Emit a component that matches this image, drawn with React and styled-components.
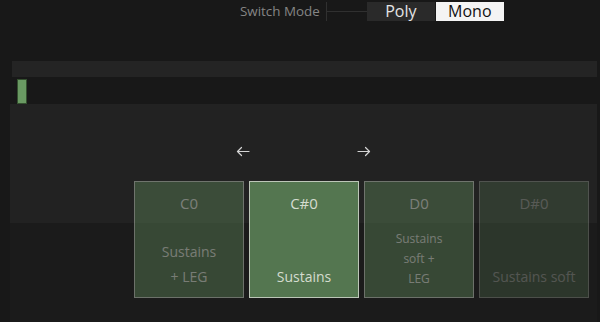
import React from "react";
import styled, { createGlobalStyle } from "styled-components";

const Global = createGlobalStyle`
  html, body { margin: 0; padding: 0; background: #181818; }
  body { font-family: "Open Sans", "Noto Sans", sans-serif; overflow: hidden; }
  * { box-sizing: border-box; }
`;

const Page = styled.div`
  width: 600px;
  height: 322px;
  display: flex;
  flex-direction: column;
  background: #181818;
`;

const Header = styled.div`
  display: flex;
  align-items: center;
  height: 23px;
  padding-left: 240px;
`;

const ModeLabel = styled.span`
  font-size: 13.4px;
  color: #858585;
  line-height: 19px;
`;

const Connector = styled.div`
  width: 41px;
  height: 19px;
  margin-left: 6px;
  border-left: 1px solid #303030;
  display: flex;
  align-items: center;
  &::after {
    content: "";
    flex: 1;
    height: 1px;
    background: #303030;
  }
`;

const Segmented = styled.div`
  display: flex;
  gap: 1px;
`;

const SegButton = styled.div`
  width: 68px;
  height: 19px;
  display: flex;
  align-items: center;
  justify-content: center;
  font-size: 16px;
  line-height: 19px;
  background: ${(p) => (p.$active ? "#f4f4f4" : "#2a2a2a")};
  color: ${(p) => (p.$active ? "#111" : "#e4e4e4")};
`;

const TrackBar = styled.div`
  margin: 38px 0 0 12px;
  width: 585px;
  height: 16px;
  background: #242424;
`;

const Marker = styled.div`
  margin: 2px 0 0 17px;
  width: 10px;
  height: 25px;
  background: #6a9a63;
  border: 1px solid #34502f;
`;

const Panel = styled.div`
  margin-left: 10px;
  width: 587px;
  flex: 1;
  background: linear-gradient(#222222 0 119px, #1b1b1b 119px);
  display: flex;
  flex-direction: column;
`;

const ArrowRow = styled.div`
  margin-top: 37px;
  height: 20px;
  display: flex;
  justify-content: center;
  align-items: center;
  gap: 101px;
`;

const ArrowIcon = styled.svg`
  width: 20px;
  height: 20px;
  display: block;
`;

const Arrow = ({ dir }) => (
  <ArrowIcon viewBox="0 0 20 20">
    <g
      transform={dir === "right" ? "translate(20 0) scale(-1 1)" : undefined}
      fill="none"
      stroke="#d4d4d4"
      strokeWidth="1.2"
      strokeLinecap="round"
      strokeLinejoin="round"
    >
      <path d="M4.5 10.5 H16" />
      <path d="M8.5 6.5 L4.5 10.5 L8.5 14.5" />
    </g>
  </ArrowIcon>
);

const CardRow = styled.div`
  margin-top: 20px;
  padding-left: 124px;
  display: flex;
  gap: 5px;
`;

const Card = styled.div`
  width: 110px;
  height: 117px;
  display: flex;
  flex-direction: column;
  justify-content: space-between;
  align-items: center;
  padding: 11px 4px 8px;
  background: #547650;
  border: 1px solid #bcc6b8;
  color: #d4dccf;
  opacity: ${(p) => p.$opacity};
  text-align: center;
`;

const Note = styled.div`
  font-size: 15px;
  line-height: 20px;
`;

const Desc = styled.div`
  font-size: ${(p) => (p.$small ? 12 : 14)}px;
  line-height: ${(p) => (p.$small ? 20 : 25)}px;
`;

const cards = [
  { note: "C0", lines: ["Sustains", "+ LEG"], opacity: 0.5 },
  { note: "C#0", lines: ["Sustains"], opacity: 1 },
  { note: "D0", lines: ["Sustains", "soft +", "LEG"], opacity: 0.5, small: true },
  { note: "D#0", lines: ["Sustains soft"], opacity: 0.3 },
];

export default function App() {
  return (
    <>
      <Global />
      <Page>
        <Header>
          <ModeLabel>Switch Mode</ModeLabel>
          <Connector />
          <Segmented>
            <SegButton>Poly</SegButton>
            <SegButton $active>Mono</SegButton>
          </Segmented>
        </Header>
        <TrackBar />
        <Marker />
        <Panel>
          <ArrowRow>
            <Arrow dir="left" />
            <Arrow dir="right" />
          </ArrowRow>
          <CardRow>
            {cards.map((c) => (
              <Card key={c.note} $opacity={c.opacity}>
                <Note>{c.note}</Note>
                <Desc $small={c.small}>
                  {c.lines.map((l) => (
                    <div key={l}>{l}</div>
                  ))}
                </Desc>
              </Card>
            ))}
          </CardRow>
        </Panel>
      </Page>
    </>
  );
}
